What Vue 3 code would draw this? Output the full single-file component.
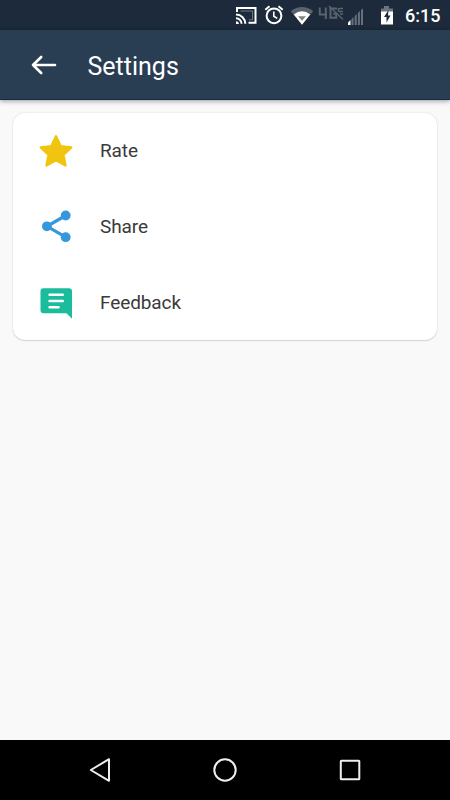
<script setup>
const items = [
  { id: 'rate', label: 'Rate' },
  { id: 'share', label: 'Share' },
  { id: 'feedback', label: 'Feedback' },
]
</script>

<template>
  <div class="screen">
    <header class="status">
      <svg width="29" height="30" viewBox="232 0 29 30" fill="none" stroke="#fff" stroke-width="2">
        <path d="M237 12V8h18.500v14.800h-7" />
        <path d="M240.500 11h12v8.800h-3.500" stroke="#6f7b88" stroke-width="1" />
        <path d="M236 14.500a9.300 9.300 0 0 1 9.300 9.300M236 18.200a5.600 5.600 0 0 1 5.600 5.600" />
        <path d="M236 21.200a2.800 2.800 0 0 1 2.800 2.800H236z" fill="#fff" stroke="none" />
      </svg>
      <svg width="26" height="30" viewBox="261 0 26 30" fill="none" stroke="#fff" stroke-width="2">
        <circle cx="274" cy="15.800" r="7.400" />
        <path d="M265.300 9.700l4.200-3.500M282.700 9.700l-4.200-3.500" />
        <path d="M273.800 11.500v4.700l3.500 2.200" stroke-width="1.600" />
      </svg>
      <svg width="29" height="30" viewBox="287 0 29 30">
        <path d="M290.800 11.200Q302 2.800 313.200 11.200L302 24.800z" fill="#59636e" />
        <path d="M293.800 14.600Q302 8 310.200 14.600L302 24.800z" fill="#fff" />
        <path d="M298 16.300H306L302 20.800z" fill="#85827f" />
      </svg>
      <svg width="30" height="30" viewBox="316 0 30 30" fill="none" stroke="#59636e" stroke-width="2">
        <path d="M319.800 7.500v7h7.200M325.800 7.500v11.500M337 8.500h-6.500v9.300h5.700v-4h-3" />
        <path d="M329 6L343 19.500" stroke-width="1.500" />
        <path d="M338.500 8v4M339 8.500h4M339 11.500h4M340 14h3" stroke-width="1.500" />
      </svg>
      <svg class="signal" width="20" height="30" viewBox="346 0 20 30" fill="#65707b">
        <path d="M348 25v-2.500l2.500-2.500v5z" fill="#fff" />
        <path d="M351.500 25v-6l2-2v8zM354.700 25v-9l2-2v11zM357.900 25v-12l2-2v14zM361 25v-15l2-1.500V25z" />
      </svg>
      <svg class="battery" width="14" height="30" viewBox="380 0 14 30">
        <path d="M384 6h5v2.500h4V12h-12V8.500h3z" fill="#6b7580" />
        <path d="M381 11.500h12V24.500h-12z" fill="#fff" />
        <path d="M388.500 10l-4.500 7h2.500v5.500l4-7H388z" fill="#1c2a3b" />
      </svg>
      <span class="time">6:15</span>
    </header>

    <div class="toolbar">
      <svg class="back" width="26" height="22" viewBox="0 0 26 22" fill="none" stroke="#fff" stroke-width="2.600" stroke-linecap="round" stroke-linejoin="round">
        <path d="M24 11H2M10.200 3L2 11l8.200 8" />
      </svg>
      <h1>Settings</h1>
    </div>

    <main>
      <ul class="card">
        <li v-for="item in items" :key="item.id">
          <svg v-if="item.id === 'rate'" width="36" height="36" viewBox="38 133 36 36">
            <path d="M56 136.300L60.600 146.100L71.300 147.400L63.400 154.800L65.500 165.400L56 160.200L46.500 165.400L48.600 154.800L40.700 147.400L51.400 146.100z" fill="#f1c40f" stroke="#f1c40f" stroke-width="2.400" stroke-linejoin="round" />
          </svg>
          <svg v-else-if="item.id === 'share'" width="36" height="36" viewBox="38 209 36 36" fill="#3498db">
            <path d="M65.700 215.500L47 226.300L65.700 237.200" fill="none" stroke="#3498db" stroke-width="3.200" />
            <circle cx="65.700" cy="215.500" r="4.900" />
            <circle cx="46.900" cy="226.300" r="4.900" />
            <circle cx="65.700" cy="237.200" r="4.900" />
          </svg>
          <svg v-else width="36" height="36" viewBox="38 285 36 36">
            <path d="M43.500 288.300H69a3 3 0 0 1 3 3V318.800L66.500 313.300H43.500a3 3 0 0 1-3-3V291.300a3 3 0 0 1 3-3z" fill="#1abc9c" />
            <path d="M49.600 294.800H62.700M49.600 301H62.700M49.600 307.300H58.500" stroke="#fff" stroke-width="2.600" stroke-linecap="round" />
          </svg>
          <span>{{ item.label }}</span>
        </li>
      </ul>
    </main>

    <nav>
      <svg width="30" height="30" viewBox="85 755 30 30"><path d="M109 759.200V780.800L90.800 770z" /></svg>
      <svg width="30" height="30" viewBox="210 755 30 30"><circle cx="225" cy="770" r="10.700" /></svg>
      <svg width="30" height="30" viewBox="335 755 30 30"><rect x="340.800" y="760.800" width="18.500" height="18.500" rx="0.500" /></svg>
    </nav>
  </div>
</template>

<style>
body {
  margin: 0;
}
</style>

<style scoped>
.screen {
  width: 450px;
  height: 800px;
  display: flex;
  flex-direction: column;
  overflow: hidden;
  background: #f9f9f9;
  font-family: Roboto, sans-serif;
}
svg {
  display: block;
  flex: none;
}
.status {
  height: 30px;
  flex: none;
  display: flex;
  justify-content: flex-end;
  padding-right: 10px;
  background: #1c2a3b;
}
.signal {
  margin-right: 14px;
}
.battery {
  margin-right: 11px;
}
.time {
  width: 35px;
  font-size: 18px;
  font-weight: 500;
  line-height: 32px;
  color: #fff;
  white-space: nowrap;
}
.toolbar {
  height: 70px;
  flex: none;
  display: flex;
  align-items: center;
  box-sizing: border-box;
  padding-left: 31px;
  background: #293d53;
  border-bottom: 1px solid #142c4a;
  box-shadow: 0 1px 5px rgba(0, 0, 0, 0.4);
}
h1 {
  margin: 4px 0 0 30.500px;
  font-size: 25px;
  font-weight: 400;
  line-height: 30px;
  color: #fff;
}
main {
  flex: 1;
  padding: 13px;
}
.card {
  height: 227px;
  margin: 0;
  padding: 0;
  list-style: none;
  border-radius: 12px;
  background: #fff;
  box-shadow: 0 0 2px rgba(0, 0, 0, 0.14), 0 1px 1px rgba(0, 0, 0, 0.12);
}
li {
  height: 76px;
  display: flex;
  align-items: center;
  padding-left: 25px;
}
li span {
  margin: 0 0 1px 26px;
  font-size: 19px;
  line-height: 23px;
  letter-spacing: -0.1px;
  color: #3a3a3a;
}
nav {
  height: 60px;
  flex: none;
  display: flex;
  align-items: center;
  justify-content: center;
  gap: 95px;
  background: #000;
}
nav svg {
  fill: none;
  stroke: #eee;
  stroke-width: 2;
  stroke-linejoin: round;
}
</style>
